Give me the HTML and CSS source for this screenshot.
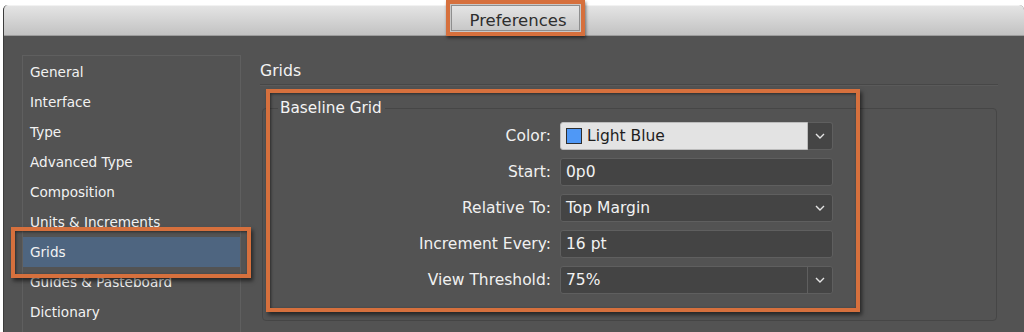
FILE: index.html
```html
<!DOCTYPE html>
<html lang="en">
<head>
  <meta charset="UTF-8" />
  <meta name="viewport" content="width=device-width, initial-scale=1.0" />
  <title>Preferences</title>
  <link rel="stylesheet" href="styles.css">
</head>
<body>
  <div class="window">
    <div class="titlebar">Preferences</div>

    <div class="body">
      <!-- category list -->
      <ul class="sidebar">
        <li>General</li>
        <li>Interface</li>
        <li>Type</li>
        <li>Advanced Type</li>
        <li>Composition</li>
        <li>Units &amp; Increments</li>
        <li class="selected">Grids</li>
        <li>Guides &amp; Pasteboard</li>
        <li>Dictionary</li>
      </ul>

      <div class="main">
        <h2>Grids</h2>
        <fieldset class="group">
          <legend>Baseline Grid</legend>
          <div class="form">
            <label>Color:</label>
            <div class="color-field">
              <div class="color-value"><span class="swatch"></span>Light Blue</div>
              <div class="drop-btn">
                <svg width="10" height="6" viewBox="0 0 10 6"><polyline points="1,1 5,5 9,1" /></svg>
              </div>
            </div>

            <label>Start:</label>
            <div class="field">0p0</div>

            <label>Relative To:</label>
            <div class="field select">
              <span>Top Margin</span>
              <svg width="10" height="6" viewBox="0 0 10 6"><polyline points="1,1 5,5 9,1" /></svg>
            </div>

            <label>Increment Every:</label>
            <div class="field">16 pt</div>

            <label>View Threshold:</label>
            <div class="field combo">
              <span>75%</span>
              <div class="drop-btn">
                <svg width="10" height="6" viewBox="0 0 10 6"><polyline points="1,1 5,5 9,1" /></svg>
              </div>
            </div>
          </div>
        </fieldset>
      </div>
    </div>
  </div>

  <!-- highlight callouts -->
  <div class="callout title-callout"></div>
  <div class="callout group-callout"></div>
  <div class="callout item-callout"></div>
</body>
</html>
```

FILE: styles.css
```css
body {
  margin: 0;
  background: #fff;
  font-family: "DejaVu Sans", sans-serif;
  overflow: hidden;
}

.window {
  margin: 5px 0 0 3px;
  height: 327px;
  background: #535353;
  border-radius: 5px 5px 0 0;
  overflow: hidden;
  border-left: 1px solid #3c3c3c;
}

.titlebar {
  height: 31px;
  box-sizing: border-box;
  line-height: 29px;
  text-align: center;
  padding-left: 8px;
  font-size: 16.5px;
  color: #2e2e2e;
  background: linear-gradient(#e4e4e4, #c2c2c2);
  border-top: 1px solid #f2f2f2;
  border-bottom: 1px solid #9c9c9c;
}

.body {
  display: flex;
  padding: 19px 0 0 18px;
}

.sidebar {
  list-style: none;
  margin: 0;
  padding: 1px 0 0;
  width: 217px;
  height: 290px;
  border: 1px solid #5f5f5f;
  border-bottom: none;
  color: #f2f2f2;
  font-size: 13.6px;
}

.sidebar li {
  height: 30px;
  line-height: 30px;
  padding-left: 7px;
  white-space: nowrap;
}

.sidebar li.selected {
  background: #4e6580;
}

.main {
  margin-left: 19px;
  width: 738px;
}

.main h2 {
  margin: 0;
  padding-top: 2px;
  height: 27px;
  line-height: 27px;
  font-size: 15.7px;
  font-weight: normal;
  color: #f4f4f4;
  border-bottom: 1px solid #474747;
  box-shadow: 0 1px 0 #5a5a5a;
}

.group {
  margin: 14px 1px 0 2px;
  padding: 5px 0 26px 15px;
  border: 1px solid #464646;
  border-radius: 4px;
}

.group legend {
  padding: 0 3px 0 2px;
  line-height: 18px;
  font-size: 15.3px;
  color: #f4f4f4;
}

.form {
  display: grid;
  grid-template-columns: 273px 273px;
  column-gap: 9px;
  row-gap: 8px;
  align-items: center;
}

.form label {
  text-align: right;
  font-size: 15.5px;
  color: #f0f0f0;
}

.field {
  height: 28px;
  box-sizing: border-box;
  display: flex;
  align-items: center;
  padding-left: 5px;
  background: #444;
  border: 1px solid #5f5f5f;
  border-radius: 3px;
  color: #f2f2f2;
  font-size: 15.5px;
}

.field.select {
  justify-content: space-between;
  padding-right: 7px;
}

.field.combo {
  justify-content: space-between;
  padding-right: 0;
}

.field.combo .drop-btn {
  border: none;
  border-left: 1px solid #5f5f5f;
  height: 26px;
}

.color-field {
  display: flex;
  height: 28px;
}

.color-value {
  width: 248px;
  box-sizing: border-box;
  display: flex;
  align-items: center;
  gap: 5px;
  padding-left: 5px;
  background: #e3e3e3;
  border: 1px solid #bcbcbc;
  border-radius: 3px 0 0 3px;
  color: #1e1e1e;
  font-size: 15.5px;
}

.swatch {
  width: 14px;
  height: 14px;
  background: #4f98f6;
  border: 1px solid #2e2e2e;
}

.drop-btn {
  width: 25px;
  box-sizing: border-box;
  display: flex;
  align-items: center;
  justify-content: center;
  background: #454545;
  border: 1px solid #5f5f5f;
  border-left: none;
  border-radius: 0 3px 3px 0;
}

svg polyline {
  fill: none;
  stroke: #e4e4e4;
  stroke-width: 1.4;
}

.callout {
  position: absolute;
  border: 4px solid #d6703d;
  box-sizing: border-box;
  box-shadow: 2px 3px 4px rgba(0, 0, 0, 0.55), inset 1px 1px 3px rgba(0, 0, 0, 0.5);
}

.title-callout {
  left: 446px;
  top: 0;
  width: 139px;
  height: 36px;
  box-shadow: 1px 2px 3px rgba(0, 0, 0, 0.5), inset 0 0 0 1px #c8c8c8, inset 0 0 0 2px #8e8e8e;
}

.group-callout {
  left: 266px;
  top: 89px;
  width: 594px;
  height: 223px;
}

.item-callout {
  left: 11px;
  top: 227px;
  width: 240px;
  height: 51px;
}
```
